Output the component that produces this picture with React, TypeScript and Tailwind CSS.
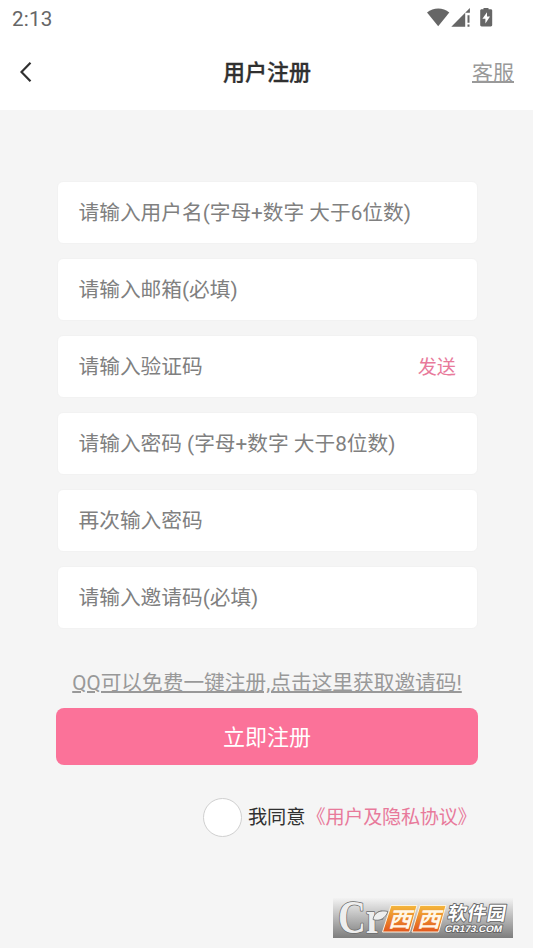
import React from 'react';

const fields = [
  { placeholder: '请输入用户名(字母+数字 大于6位数)' },
  { placeholder: '请输入邮箱(必填)' },
  { placeholder: '请输入验证码', action: '发送' },
  { placeholder: '请输入密码 (字母+数字 大于8位数)' },
  { placeholder: '再次输入密码' },
  { placeholder: '请输入邀请码(必填)' },
];

function StatusBar() {
  return (
    <div className="flex h-9 items-center justify-between pl-3 pr-10 text-[#666666]">
      <span className="pt-px text-[20.6px] leading-9 tracking-[0.2px]">2:13</span>
      <svg width="66" height="20" viewBox="0 0 66 20" fill="currentColor">
        <path d="M0 4.5C6.5-1 16-1 22.3 4.5L11.2 18.3Z" />
        <path d="M24.3 18.7 42.9 0v4.7h-4.7v14Z" />
        <path d="M40.5 7.3h2v7.4h-2zM40.5 16.5h2v2.3h-2z" />
        <path
          fillRule="evenodd"
          d="M56.5 -.6h5v1.8h2.3c.8 0 1.4.6 1.4 1.4v14.4c0 .8-.6 1.4-1.4 1.4h-9.2c-.8 0-1.4-.6-1.4-1.4V2.6c0-.8.6-1.4 1.4-1.4h1.9ZM60 4.2l-4.6 6.5h3v4.7l4.6-6.8h-3Z"
        />
      </svg>
    </div>
  );
}

function Header() {
  return (
    <header className="grid h-[74px] grid-cols-3 items-center pl-5 pr-[19px]">
      <button type="button" aria-label="返回" className="-mt-0.5 text-[#303030]">
        <svg width="12" height="20" viewBox="0 0 12 20" fill="none" stroke="currentColor" strokeWidth="2.2">
          <path d="M10.5 0.8 1.5 10l9 9.2" />
        </svg>
      </button>
      <h1 className="text-center text-[22px] font-medium leading-8 text-[#303030] [-webkit-text-stroke:0.3px]">用户注册</h1>
      <a className="justify-self-end text-[21px] leading-8 text-[#999999] underline decoration-2 underline-offset-1">
        客服
      </a>
    </header>
  );
}

function Watermark() {
  return (
    <svg className="absolute bottom-[10px] right-5 overflow-visible" width="180" height="40" viewBox="0 0 180 40">
      <defs>
        <linearGradient id="plate" x1="0" y1="0" x2="0" y2="1">
          <stop offset="0" stopColor="#f3f3f3" />
          <stop offset="0.5" stopColor="#b8b8b8" />
          <stop offset="1" stopColor="#7d7d7d" />
        </linearGradient>
        <linearGradient id="tile" x1="0" y1="0" x2="0" y2="1">
          <stop offset="0" stopColor="#f4b73c" />
          <stop offset="1" stopColor="#e2571d" />
        </linearGradient>
      </defs>
      <rect width="180" height="40" fill="url(#plate)" />
      <text
        x="5"
        y="34.5"
        textLength="45"
        fill="#eeeeee"
        stroke="#6c6c6c"
        strokeWidth="1.6"
        paintOrder="stroke"
        strokeLinejoin="round"
        fontFamily="Liberation Serif, serif"
        fontWeight="700"
        fontSize="46"
        lengthAdjust="spacingAndGlyphs"
      >
        Cr
      </text>
      <path d="M40 21.5c1-7 7-10 15-8-2.5 6.5-8 10.500-15 8Z" fill="#eeeeee" stroke="#6c6c6c" strokeWidth="0.8" />
      <g fill="url(#tile)" stroke="#fff3df" strokeWidth="1">
        <path d="M58 7.5h26l-7.5 26.5H49.5Z" />
        <path d="M87 7.5h26l-7.5 26.5H79Z" />
      </g>
      <g fill="#fff6e8" fontFamily="Noto Sans CJK SC, sans-serif" fontWeight="700" fontSize="21">
        <text transform="translate(55 28.5) skewX(-16) scale(1.1 1)">西</text>
        <text transform="translate(84 28.5) skewX(-16) scale(1.1 1)">西</text>
      </g>
      <g fill="#ffffff" stroke="#666666" strokeWidth="1.8" paintOrder="stroke" strokeLinejoin="round">
        <text
          transform="translate(114 22) skewX(-10)"
          fontFamily="Noto Sans CJK SC, sans-serif"
          fontWeight="700"
          fontSize="19"
          textLength="58"
        >
          软件园
        </text>
        <text
          transform="translate(111.5 33.5) skewX(-12)"
          fontFamily="Liberation Sans, sans-serif"
          fontWeight="700"
          fontSize="9.5"
          textLength="57"
          lengthAdjust="spacingAndGlyphs"
        >
          CR173.COM
        </text>
      </g>
    </svg>
  );
}

export default function App() {
  return (
    <div className="relative flex h-[948px] w-[533px] flex-col overflow-hidden bg-[#f5f5f5] font-['Roboto','Noto_Sans_CJK_SC',sans-serif]">
      <div className="bg-white">
        <StatusBar />
        <Header />
      </div>

      <main className="flex flex-col pl-[56px] pr-[55px] pt-[71px]">
        <div className="flex flex-col gap-[14px] pl-px">
          {fields.map((field) => (
            <div
              key={field.placeholder}
              className="flex h-[63px] items-center justify-between rounded-md border border-[#f2f2f2] bg-white pl-[20.5px] pr-[21px]"
            >
              <span className="text-[20.7px] leading-[30px] text-[#808080]">{field.placeholder}</span>
              {field.action && (
                <span className="pt-0.5 text-[19.2px] leading-[30px] text-[#e87a9b]">{field.action}</span>
              )}
            </div>
          ))}
        </div>

        <a className="mt-[39px] self-center whitespace-nowrap text-[20.7px] leading-[30px] text-[#999999] underline decoration-2 underline-offset-1">
          QQ可以免费一键注册,点击这里获取邀请码!
        </a>

        <button type="button" className="mt-[10px] h-[57px] rounded-lg bg-[#fb7299] pt-0.5 text-[22px] leading-8 text-white">
          立即注册
        </button>

        <label className="mt-[33px] flex items-center self-end whitespace-nowrap pr-[1.5px] text-[19.2px] leading-[30px]">
          <span className="size-[39px] rounded-full border-[1.5px] border-[#d0d0d0] bg-white" />
          <span className="ml-1.5 text-[#303030]">我同意</span>
          <span className="ml-px text-[#e87a9b] tracking-[-0.3px]">《用户及隐私协议》</span>
        </label>
      </main>

      <Watermark />
    </div>
  );
}
